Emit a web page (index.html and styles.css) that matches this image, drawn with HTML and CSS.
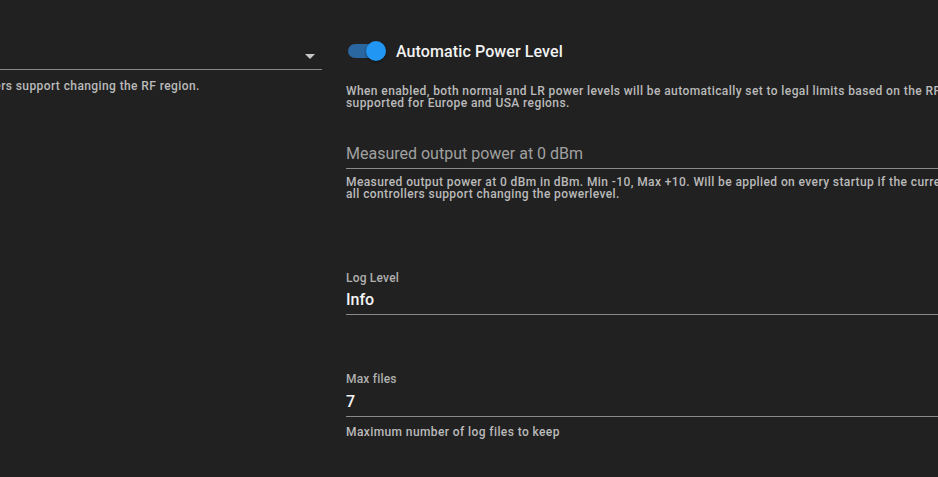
FILE: index.html
```html
<!DOCTYPE html>
<html lang="en">
<head>
<meta charset="utf-8">
<title>Settings</title>
<link rel="stylesheet" href="styles.css">
</head>
<body>
<div class="page">
  <div class="col">
    <div class="select">
      <div class="select-value"></div>
      <span class="arrow"></span>
    </div>
    <div class="msg hint-left">Will be applied on every startup if the current region of your controller is different than this one. Not all controllers support changing the RF region.</div>
  </div>
  <div class="col">
    <div class="switch-row">
      <span class="switch"><span class="track"></span><span class="thumb"></span></span>
      <span class="switch-label">Automatic Power Level</span>
    </div>
    <div class="msg desc-1">When enabled, both normal and LR power levels will be automatically set to legal limits based on the RF region. Manual power level settings are then ignored. Currently only supported for Europe and USA regions.</div>

    <div class="field field-measured">
      <div class="input placeholder">Measured output power at 0 dBm</div>
    </div>
    <div class="msg desc-2">Measured output power at 0 dBm in dBm. Min -10, Max +10. Will be applied on every startup if the current measured power level of your controller is different than this one. Not all controllers support changing the powerlevel.</div>

    <div class="field field-log">
      <div class="label">Log Level</div>
      <div class="input value">Info</div>
    </div>

    <div class="field field-max">
      <div class="label">Max files</div>
      <div class="input value">7</div>
    </div>
    <div class="msg desc-3">Maximum number of log files to keep</div>
  </div>
</div>
</body>
</html>
```
FILE: styles.css
```css
html, body {
  margin: 0;
  padding: 0;
  background: #212121;
  overflow: hidden;
  height: 100%;
}
body {
  font-family: Roboto, "Liberation Sans", sans-serif;
  color: #ffffff;
}
.page {
  display: grid;
  grid-template-columns: 965px 1025px;
  column-gap: 24px;
  margin-left: -643px;
  padding-top: 41px;
}
.col {
  display: flex;
  flex-direction: column;
  min-width: 0;
}
.msg {
  font-size: 12px;
  line-height: 12px;
  font-weight: 500;
  letter-spacing: 0.4px;
  color: #bababa;
}
/* left select */
.select {
  display: flex;
  align-items: center;
  justify-content: flex-end;
  height: 28px;
  border-bottom: 1px solid #8a8a8a;
  padding-right: 7px;
}
.arrow {
  width: 0;
  height: 0;
  border-left: 5.5px solid transparent;
  border-right: 5.5px solid transparent;
  border-top: 5px solid #c8c8c8;
  margin-top: 2px;
}
.hint-left {
  margin-top: 10px;
}
/* switch */
.switch-row {
  display: flex;
  align-items: center;
  height: 20px;
  padding-left: 2px;
}
.switch {
  display: flex;
  align-items: center;
  width: 38px;
  height: 20px;
}
.track {
  width: 36px;
  height: 14px;
  border-radius: 7px;
  background: #2a67a0;
}
.thumb {
  width: 20px;
  height: 20px;
  border-radius: 50%;
  background: #2196f3;
  margin-left: -18px;
  box-shadow: 0 1px 3px rgba(0,0,0,0.45);
}
.switch-label {
  margin-left: 10px;
  font-size: 16px;
  font-weight: 500;
  color: #f2f2f2;
  line-height: 20px;
  padding-top: 1px;
  letter-spacing: 0.1px;
}
.desc-1 {
  margin-top: 24px;
}
/* fields */
.field {
  border-bottom: 1px solid #8a8a8a;
  padding-bottom: 4px;
}
.input {
  font-size: 16px;
  line-height: 20px;
}
.placeholder {
  color: #a0a0a0;
}
.value {
  color: #f5f5f5;
  font-weight: 500;
}
.label {
  font-size: 12px;
  line-height: 12px;
  font-weight: 500;
  letter-spacing: 0.2px;
  color: #b0b0b0;
  margin-bottom: 6px;
}
.field-measured {
  margin-top: 35px;
}
.desc-2 {
  margin-top: 7px;
}
.field-log {
  margin-top: 72px;
}
.field-max {
  margin-top: 58px;
}
.field-max .label {
  margin-bottom: 7px;
}
.desc-3 {
  margin-top: 9px;
}
```
